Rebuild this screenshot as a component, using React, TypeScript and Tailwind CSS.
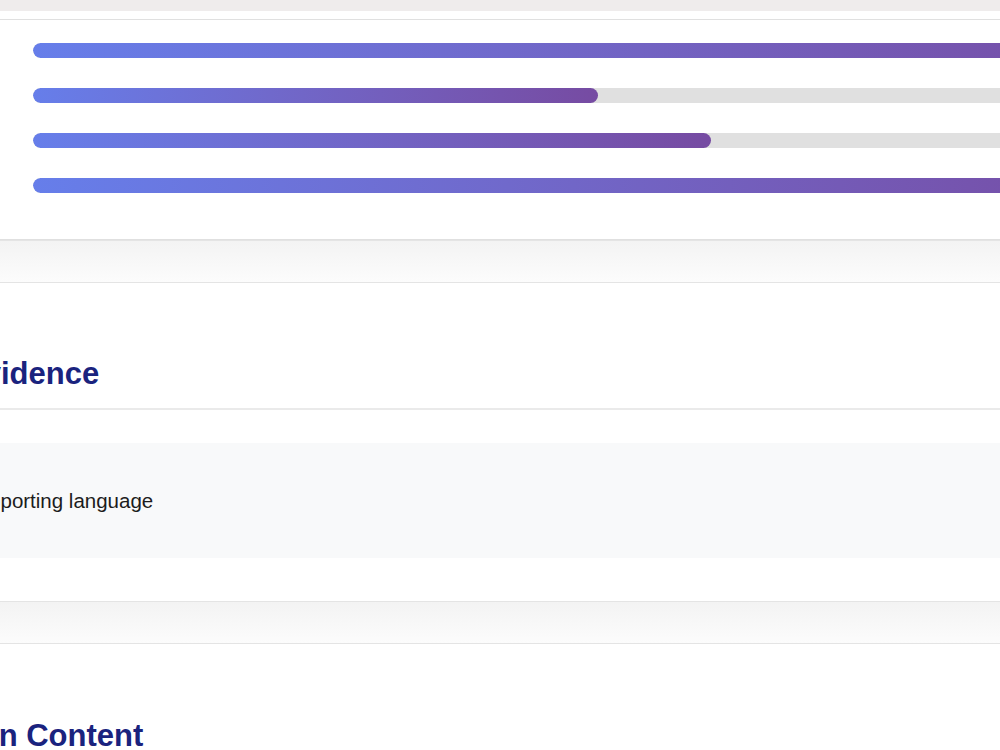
import React from 'react';

const bars = [
  { label: 'Overall', value: 100 },
  { label: 'Tone', value: 50 },
  { label: 'Structure', value: 60 },
  { label: 'Vocabulary', value: 100 },
];

const TRACK_WIDTH = 1130;

function ScoreBars() {
  return (
    <div className="bg-white border-t border-b border-[#e0e0e0] pt-[23px] pb-[46px] pl-[70px]">
      <div className="flex flex-col gap-[30px]">
        {bars.map((bar) => (
          <div
            key={bar.label}
            className="h-[15px] rounded-full bg-[#e0e0e0] overflow-hidden"
            style={{ width: TRACK_WIDTH }}
          >
            <div
              className="h-full rounded-full bg-gradient-to-r from-[#667eea] to-[#764ba2]"
              style={{ width: `${bar.value}%` }}
            />
          </div>
        ))}
      </div>
    </div>
  );
}

function Divider() {
  return (
    <div className="h-[43px] border-t border-b border-[#e4e4e4] bg-gradient-to-b from-[#f3f3f3] to-[#fcfcfc]" />
  );
}

function SectionHeading({ children, className = '' }: { children: React.ReactNode; className?: string }) {
  return (
    <h2
      className={`text-[31px] leading-[36px] font-bold text-[#1a237e] pb-4 border-b-2 border-[#eaeaea] ${className}`}
    >
      {children}
    </h2>
  );
}

export default function App() {
  return (
    <div className="w-screen h-screen overflow-hidden bg-white font-['Liberation_Sans',Arial,sans-serif]">
      <div className="w-[1300px] -ml-[37px]">
        <div className="h-[11px] bg-[#efecec]" />
        <div className="h-[8px] bg-white" />
        <ScoreBars />
        <Divider />
        <section className="pt-[73px] pb-[43px]">
          <SectionHeading>Evidence</SectionHeading>
          <div className="mt-[33px] bg-[#f8f9fa] py-[41px] pl-[1px]">
            <p className="text-[20.5px] leading-[33px] text-[#1c1c1c]">Supporting language</p>
          </div>
        </section>
        <Divider />
        <section className="pt-[74px]">
          <SectionHeading className="-ml-[16px]">Main Content</SectionHeading>
        </section>
      </div>
    </div>
  );
}
